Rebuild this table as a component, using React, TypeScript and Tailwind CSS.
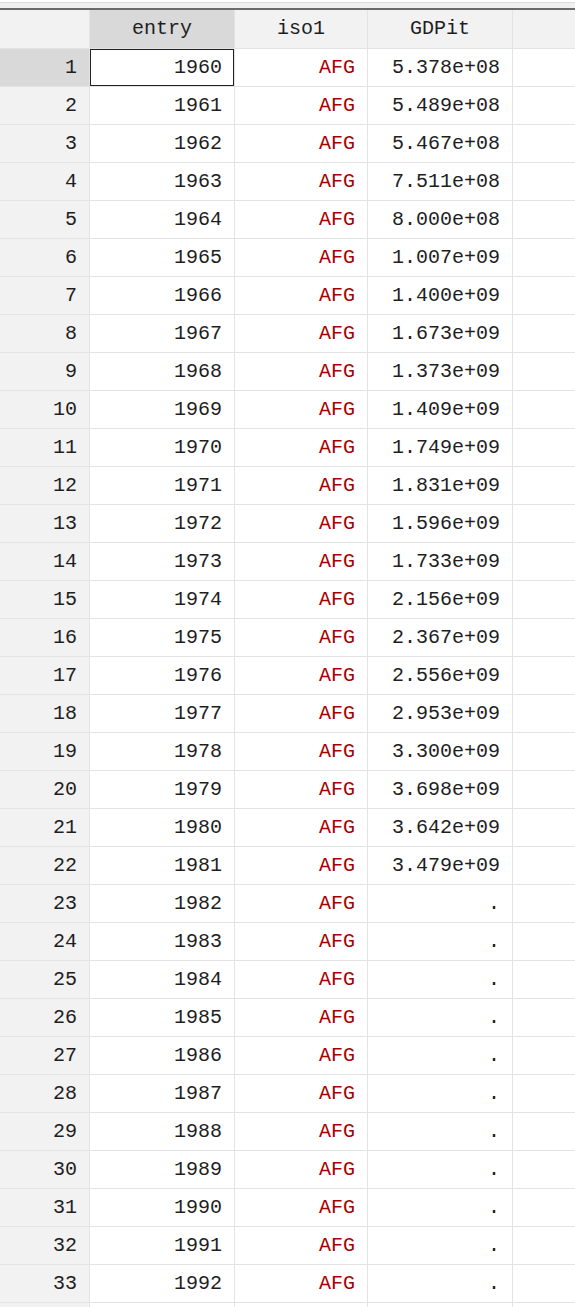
import React from "react";

const gdp = [
  "5.378e+08", "5.489e+08", "5.467e+08", "7.511e+08", "8.000e+08", "1.007e+09",
  "1.400e+09", "1.673e+09", "1.373e+09", "1.409e+09", "1.749e+09", "1.831e+09",
  "1.596e+09", "1.733e+09", "2.156e+09", "2.367e+09", "2.556e+09", "2.953e+09",
  "3.300e+09", "3.698e+09", "3.642e+09", "3.479e+09",
];

const rows = Array.from({ length: 33 }, (_, i) => ({
  n: i + 1,
  entry: 1960 + i,
  iso: "AFG",
  gdp: gdp[i] ?? ".",
}));

export default function App() {
  return (
    <div
      className="w-[575px] h-[1307px] overflow-hidden bg-white text-[20px] text-[#1e1e1e]"
      style={{ fontFamily: '"Liberation Mono", "DejaVu Sans Mono", monospace' }}
    >
      {/* window chrome */}
      <div className="h-[2px] bg-white" />
      <div className="h-px bg-[#dcdcdc]" />
      <div className="h-[5px] bg-[#f0f0f0]" />
      <div className="h-[2px] bg-[#6b6b6b]" />

      {/* header */}
      <div className="flex h-[39px] border-b border-[#e3e3e3] bg-[#f2f2f2]">
        <div className="w-[90px] border-r border-[#e3e3e3]" />
        <div className="w-[145px] border-r border-[#e3e3e3] bg-[#d9d9d9] flex items-center justify-center">
          entry
        </div>
        <div className="w-[133px] border-r border-[#e3e3e3] flex items-center justify-center">
          iso1
        </div>
        <div className="w-[145px] border-r border-[#e3e3e3] flex items-center justify-center">
          GDPit
        </div>
        <div className="flex-1" />
      </div>

      {rows.map((r) => (
        <div key={r.n} className="flex h-[38px] border-b border-[#e3e3e3]">
          <div
            className={`w-[90px] border-r border-[#e3e3e3] flex items-center justify-end pr-3 ${
              r.n === 1 ? "bg-[#d9d9d9]" : "bg-[#f2f2f2]"
            }`}
          >
            {r.n}
          </div>
          <div className="relative w-[145px] border-r border-[#e3e3e3] flex items-center justify-end pr-3">
            {r.n === 1 && <div className="absolute inset-0 border border-[#222]" />}
            {r.entry}
          </div>
          <div className="w-[133px] border-r border-[#e3e3e3] flex items-center justify-end pr-3 text-[#a80000]">
            {r.iso}
          </div>
          <div className="w-[145px] border-r border-[#e3e3e3] flex items-center justify-end pr-3">
            {r.gdp}
          </div>
          <div className="flex-1" />
        </div>
      ))}

      {/* next row, scrolled below the edge */}
      <div className="flex h-[38px]">
        <div className="w-[90px] border-r border-[#e3e3e3] bg-[#f2f2f2]" />
        <div className="w-[145px] border-r border-[#e3e3e3]" />
        <div className="w-[133px] border-r border-[#e3e3e3]" />
        <div className="w-[145px] border-r border-[#e3e3e3]" />
        <div className="flex-1" />
      </div>
    </div>
  );
}
